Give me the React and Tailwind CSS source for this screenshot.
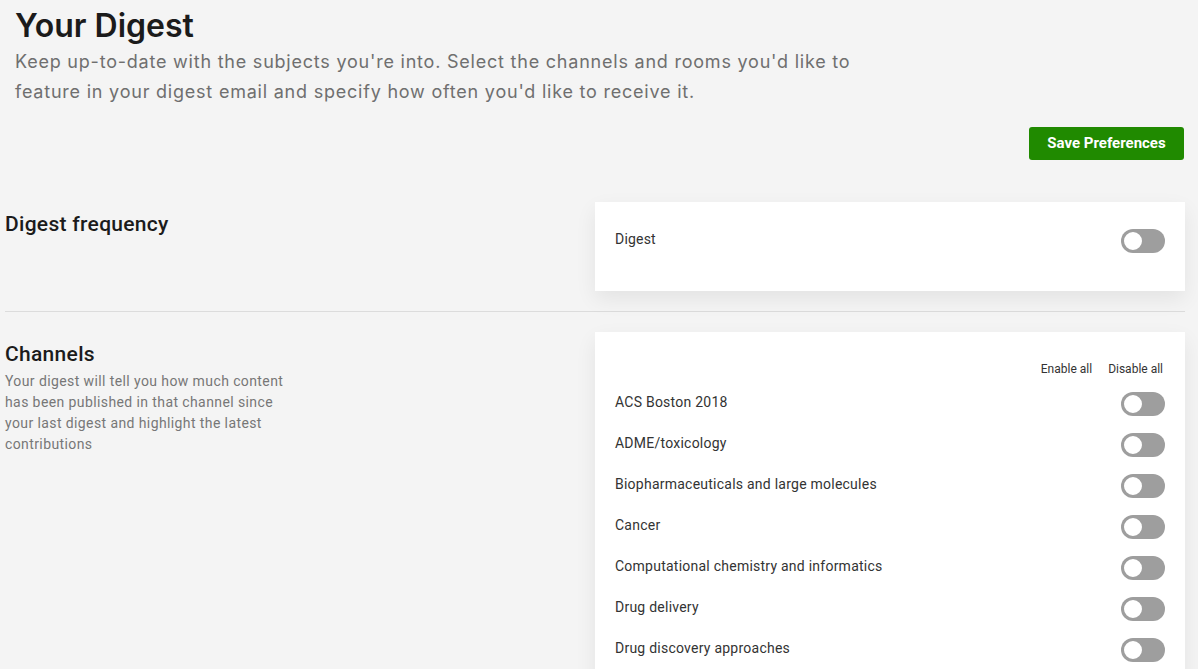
import React, { useState } from 'react';

const channels = [
  'ACS Boston 2018',
  'ADME/toxicology',
  'Biopharmaceuticals and large molecules',
  'Cancer',
  'Computational chemistry and informatics',
  'Drug delivery',
  'Drug discovery approaches',
  'Drug targets',
  'Formulation',
];

const Toggle = ({ on, onClick }) => (
  <button
    onClick={onClick}
    className={`relative w-[44px] h-[24px] rounded-full shrink-0 ${on ? 'bg-[#208a00]' : 'bg-[#9e9e9e]'}`}
  >
    <span
      className={`absolute top-[1px] w-[22px] h-[22px] rounded-full bg-white border-2 border-[#9e9e9e] ${on ? 'left-[21px]' : 'left-[1px]'}`}
    />
  </button>
);

const App = () => {
  const [digest, setDigest] = useState(false);
  const [enabled, setEnabled] = useState({});

  const setAll = (value) => {
    const next = {};
    channels.forEach((c) => (next[c] = value));
    setEnabled(next);
  };

  return (
    <div className="min-h-screen bg-[#f4f4f4] font-['Roboto',sans-serif] text-[#333]">
      {/* Header */}
      <div className="px-[15px] pt-[7px]">
        <h1 className="font-['Inter',sans-serif] text-[32px] leading-[38px] font-semibold text-[#1b1b1b]">
          Your Digest
        </h1>
        <p className="font-['Inter',sans-serif] text-[18px] leading-[30px] tracking-[0.78px] text-[#6f6f6f] max-w-[870px] mt-[2px]">
          Keep up-to-date with the subjects you're into. Select the channels and rooms you'd like to feature in your digest email and specify how often you'd like to receive it.
        </p>
      </div>

      <div className="flex justify-end pr-[14px] mt-[20px]">
        <button className="w-[155px] h-[33px] rounded-[3px] bg-[#208a00] text-white text-[15px] font-bold">
          Save Preferences
        </button>
      </div>

      <div className="pl-[5px] pr-[13px]">
        {/* Digest frequency */}
        <div className="flex mt-[42px] pb-[20px] border-b border-[#dcdcdc]">
          <div className="w-[590px] pt-[10px]">
            <h2 className="text-[21px] leading-[24px] font-medium tracking-[0.3px] text-[#1b1b1b]">Digest frequency</h2>
          </div>
          <div className="flex-1 h-[89px] bg-white shadow-[0_8px_20px_rgba(0,0,0,0.07)] px-[20px] pt-[27px]">
            <div className="flex items-start justify-between">
              <span className="text-[14px] leading-[20px] tracking-[0.2px]">Digest</span>
              <Toggle on={digest} onClick={() => setDigest(!digest)} />
            </div>
          </div>
        </div>

        {/* Channels */}
        <div className="flex mt-[20px]">
          <div className="w-[590px] pt-[10px]">
            <h2 className="text-[21px] leading-[24px] font-medium tracking-[0.3px] text-[#1b1b1b]">Channels</h2>
            <p className="text-[14px] leading-[21px] tracking-[0.4px] text-[#777] max-w-[290px] mt-[5px]">
              Your digest will tell you how much content has been published in that channel since your last digest and highlight the latest contributions
            </p>
          </div>
          <div className="flex-1 bg-white shadow-[0_8px_20px_rgba(0,0,0,0.07)] px-[20px] pt-[29px] pb-[20px]">
            <div className="flex justify-end gap-[16px] pr-[2px] text-[12px] leading-[16px] text-[#333]">
              <button onClick={() => setAll(true)}>Enable all</button>
              <button onClick={() => setAll(false)}>Disable all</button>
            </div>
            <div className="mt-[15px] flex flex-col gap-[17px]">
              {channels.map((c) => (
                <div key={c} className="flex items-start justify-between">
                  <span className="text-[14px] leading-[20px] tracking-[0.24px]">{c}</span>
                  <Toggle
                    on={!!enabled[c]}
                    onClick={() => setEnabled({ ...enabled, [c]: !enabled[c] })}
                  />
                </div>
              ))}
            </div>
          </div>
        </div>
      </div>
    </div>
  );
};

export default App;
